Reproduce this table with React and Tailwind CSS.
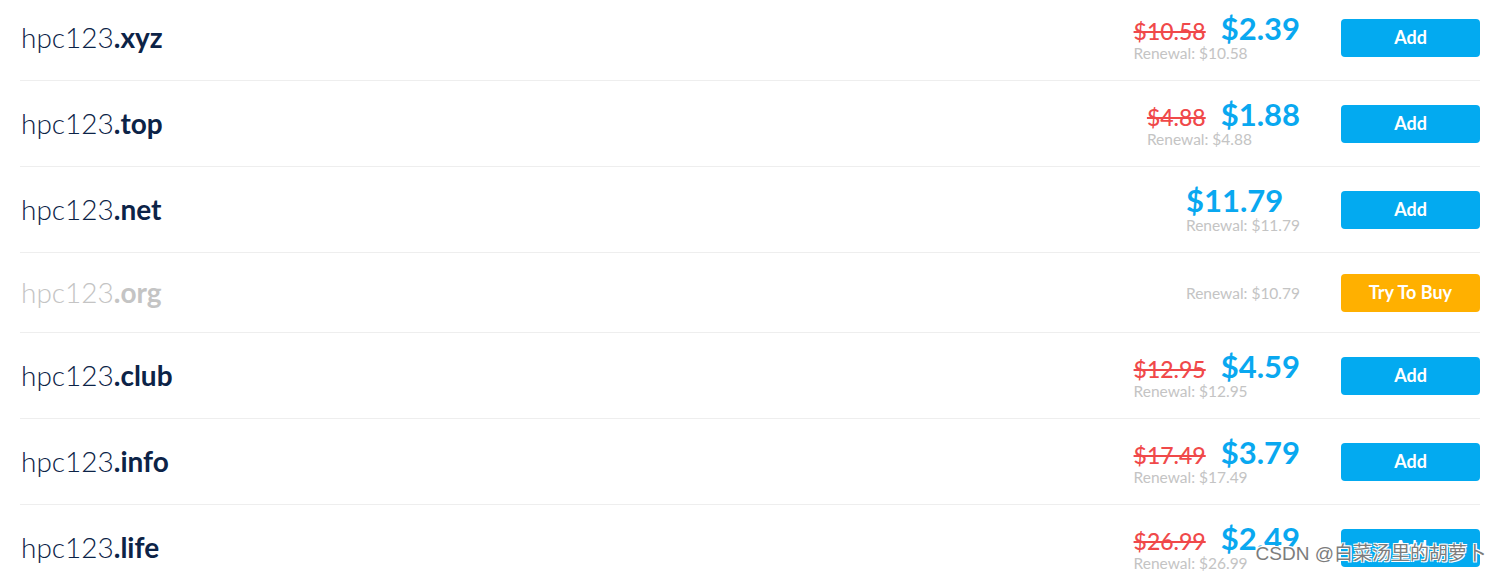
const rows = [
  { name: 'hpc123', tld: '.xyz', old: '$10.58', price: '$2.39', renewal: '$10.58' },
  { name: 'hpc123', tld: '.top', old: '$4.88', price: '$1.88', renewal: '$4.88' },
  { name: 'hpc123', tld: '.net', price: '$11.79', renewal: '$11.79' },
  { name: 'hpc123', tld: '.org', renewal: '$10.79', taken: true },
  { name: 'hpc123', tld: '.club', old: '$12.95', price: '$4.59', renewal: '$12.95' },
  { name: 'hpc123', tld: '.info', old: '$17.49', price: '$3.79', renewal: '$17.49' },
  { name: 'hpc123', tld: '.life', old: '$26.99', price: '$2.49', renewal: '$26.99' },
];

function DomainRow({ row }) {
  return (
    <div className={`flex items-center border-b border-[#eeeeee] ${row.taken ? 'h-[80px]' : 'h-[86px]'}`}>
      <div
        className={`flex-1 pl-px pb-[2px] text-[28px] leading-none font-light ${row.taken ? 'text-[#c4c4c4]' : 'text-[#0c2347]'}`}
        style={{ fontFamily: 'Lato, "Liberation Sans", sans-serif' }}
      >
        {row.name}
        <span className="font-bold">{row.tld}</span>
      </div>
      <div className="flex flex-col items-start" style={{ fontFamily: 'Lato, "Liberation Sans", sans-serif' }}>
        {row.price && (
          <div className="flex items-baseline gap-[15px]">
            {row.old && (
              <span className="text-[23px] leading-none font-medium text-[#f0494a] line-through decoration-[2px]">{row.old}</span>
            )}
            <span className="text-[31px] leading-none font-bold text-[#09a8f0]">{row.price}</span>
          </div>
        )}
        <div className="text-[15.5px] leading-[18px] text-[#c4c4c4]">Renewal: {row.renewal}</div>
      </div>
      <div className="ml-[41px] w-[139px]">
        {row.taken ? (
          <button className="h-[38px] w-full rounded-[4px] bg-[#ffb000] text-[18px] font-bold text-white" style={{ fontFamily: 'Lato, sans-serif' }}>
            Try To Buy
          </button>
        ) : (
          <button className="h-[38px] w-full rounded-[4px] bg-[#03aaf0] text-[18px] font-bold text-white" style={{ fontFamily: 'Lato, sans-serif' }}>
            Add
          </button>
        )}
      </div>
    </div>
  );
}

export default function App() {
  return (
    <div className="relative h-[573px] overflow-hidden bg-white">
      <div className="ml-[20px] mr-[18px] -mt-[5px]">
        {rows.map((row) => (
          <DomainRow key={row.tld} row={row} />
        ))}
      </div>
      <div
        className="absolute right-[12px] top-[540px] text-[19px] text-[#7c7c7c]"
        style={{
          fontFamily: '"Liberation Sans", "Noto Sans CJK SC", sans-serif',
          textShadow: '1px 1px 0 #fff, -1px -1px 0 #fff, 1px -1px 0 #fff, -1px 1px 0 #fff',
        }}
      >
        CSDN @白菜汤里的胡萝卜
      </div>
    </div>
  );
}
